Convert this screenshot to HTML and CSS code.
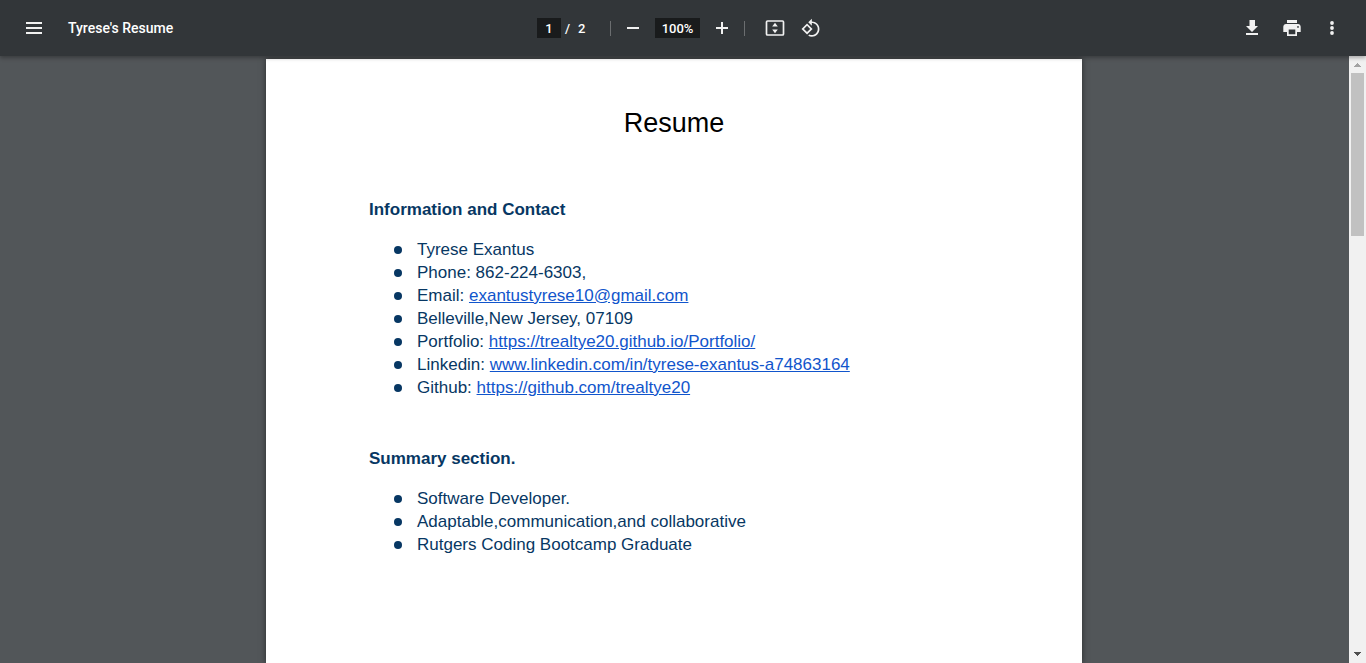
FILE: index.html
```html
<!DOCTYPE html>
<html lang="en">
<head>
<meta charset="utf-8">
<meta name="viewport" content="width=device-width, initial-scale=1">
<title>Tyrese's Resume</title>
<link rel="stylesheet" href="styles.css">
</head>
<body>
<header class="toolbar">
  <div class="start">
    <button class="icon-button" type="button" aria-label="Menu">
      <svg viewBox="0 0 24 24" shape-rendering="crispEdges"><path d="M4 6h16v2H4zM4 11h16v2H4zM4 16h16v2H4z"/></svg>
    </button>
    <h1 class="title">Tyrese's Resume</h1>
  </div>
  <div class="center">
    <input class="field page-field" type="text" value="1" aria-label="Page number">
    <span class="slash">/</span>
    <span class="page-count">2</span>
    <span class="divider"></span>
    <button class="icon-button" type="button" aria-label="Zoom out">
      <svg viewBox="0 0 24 24"><path d="M6 11h12v2H6z"/></svg>
    </button>
    <input class="field zoom-field" type="text" value="100%" aria-label="Zoom level">
    <button class="icon-button" type="button" aria-label="Zoom in">
      <svg viewBox="0 0 24 24"><path d="M18 13h-5v5h-2v-5H6v-2h5V6h2v5h5z"/></svg>
    </button>
    <span class="divider divider-wide"></span>
    <button class="icon-button" type="button" aria-label="Fit to page">
      <svg viewBox="0 0 24 24"><rect x="3.500" y="5" width="17" height="14" rx="1" fill="none" stroke="#f1f1f1" stroke-width="1.700"/><path d="M12 6.800l2.800 3.600H9.200zM12 17.200l2.800-3.600H9.200z"/></svg>
    </button>
    <button class="icon-button" type="button" aria-label="Rotate counterclockwise">
      <svg viewBox="0 0 24 24"><path d="M7.34 6.41L.86 12.9l6.49 6.48 6.49-6.48-6.5-6.49zM3.69 12.9l3.66-3.66L11 12.9l-3.66 3.66-3.65-3.66zm15.67-6.26C17.61 4.88 15.3 4 13 4V.76L8.76 5 13 9.24V6c1.79 0 3.58.68 4.95 2.05 2.73 2.73 2.73 7.17 0 9.9C16.58 19.32 14.79 20 13 20c-.97 0-1.94-.21-2.84-.61l-1.49 1.49C10.02 21.62 11.51 22 13 22c2.3 0 4.61-.88 6.36-2.64 3.52-3.51 3.52-9.21 0-12.72z" transform="translate(1.800 2) scale(.85)"/></svg>
    </button>
  </div>
  <div class="end">
    <button class="icon-button" type="button" aria-label="Download">
      <svg viewBox="0 0 24 24"><path d="M18 10h-3V4H9.500v6H6l6 6zM6 17h12v2H6z"/></svg>
    </button>
    <button class="icon-button" type="button" aria-label="Print">
      <svg viewBox="0 0 24 24"><path fill-rule="evenodd" d="M17 4H7v3h10zM6 8C4.500 8 3.300 9.200 3.300 10.700V16H7v4h10v-4h3.700v-5.300C20.700 9.200 19.500 8 18 8zM15.300 18.200H8.700v-4.700h6.600zM18 11.800a.9.9 0 1 1 0-1.800.9.900 0 0 1 0 1.800z"/></svg>
    </button>
    <button class="icon-button" type="button" aria-label="More actions">
      <svg viewBox="0 0 24 24"><circle cx="12" cy="7" r="1.900"/><circle cx="12" cy="12" r="1.900"/><circle cx="12" cy="17" r="1.900"/></svg>
    </button>
  </div>
</header>
<div class="viewer">
  <main class="pages">
    <article class="page">
      <h2 class="doc-title">Resume</h2>
      <section class="section">
        <h3 class="heading">Information and Contact</h3>
        <ul class="list">
          <li>Tyrese Exantus</li>
          <li>Phone: 862-224-6303,</li>
          <li>Email: <a href="mailto:exantustyrese10@gmail.com">exantustyrese10@gmail.com</a></li>
          <li>Belleville,New Jersey, 07109</li>
          <li>Portfolio: <a href="https://trealtye20.github.io/Portfolio/">https://trealtye20.github.io/Portfolio/</a></li>
          <li>Linkedin: <a href="https://www.linkedin.com/in/tyrese-exantus-a74863164">www.linkedin.com/in/tyrese-exantus-a74863164</a></li>
          <li>Github: <a href="https://github.com/trealtye20">https://github.com/trealtye20</a></li>
        </ul>
      </section>
      <section class="section">
        <h3 class="heading">Summary section.</h3>
        <ul class="list">
          <li>Software Developer.</li>
          <li>Adaptable,communication,and collaborative</li>
          <li>Rutgers Coding Bootcamp Graduate</li>
        </ul>
      </section>
    </article>
  </main>
  <div class="scrollbar" aria-hidden="true">
    <svg class="arrow" viewBox="0 0 17 17" shape-rendering="crispEdges"><path d="M8 7h1v1h1v1h1v1h1v1H5v-1h1V9h1V8h1z" fill="#a3a3a3"/></svg>
    <div class="track"><div class="thumb"></div></div>
    <svg class="arrow" viewBox="0 0 17 17" shape-rendering="crispEdges"><path d="M5 6h7v1h-1v1h-1v1H9v1H8V9H7V8H6V7H5z" fill="#505050"/></svg>
  </div>
</div>
</body>
</html>
```

FILE: styles.css
```css
* {
  box-sizing: border-box;
}

body {
  margin: 0;
  height: 100vh;
  display: flex;
  flex-direction: column;
  overflow: hidden;
  background: #525659;
  font-family: Roboto, "Liberation Sans", sans-serif;
}

.toolbar {
  display: grid;
  grid-template-columns: 1fr auto 1fr;
  align-items: center;
  flex: none;
  height: 56px;
  padding: 0 18px;
  background: #323639;
  color: #fff;
  font-size: 13px;
  font-weight: 500;
  z-index: 1;
  box-shadow: 0 2px 4px rgba(0, 0, 0, 0.3);
}

.start,
.center,
.end {
  display: flex;
  align-items: center;
}

.start {
  gap: 18px;
}

.center {
  padding-right: 2px;
}

.end {
  gap: 8px;
  justify-content: flex-end;
}

.title {
  margin: 0;
  font-size: 14px;
  font-weight: 500;
}

.icon-button {
  display: flex;
  align-items: center;
  justify-content: center;
  width: 32px;
  height: 32px;
  padding: 0;
  border: 0;
  border-radius: 50%;
  background: none;
}

.icon-button + .icon-button {
  margin-left: 4px;
}

.end .icon-button {
  margin-left: 0;
}

.icon-button svg {
  width: 24px;
  height: 24px;
  fill: #f1f1f1;
}

.field {
  height: 20px;
  padding: 0;
  border: 0;
  background: #191b1c;
  color: #fff;
  font: inherit;
  text-align: center;
}

.page-field {
  width: 24px;
}

.zoom-field {
  width: 45px;
  margin: 0 6px;
}

.slash {
  width: 5px;
  margin: 0 8px 0 4px;
}

.page-count {
  width: 8px;
}

.divider {
  width: 1px;
  height: 15px;
  margin: 0 6px 0 24px;
  background: #6b6e70;
}

.divider-wide {
  margin: 0 14px 0 6px;
}

.viewer {
  display: flex;
  flex: 1;
  min-height: 0;
}

.pages {
  flex: 1;
  min-width: 0;
  padding: 3px 1px 0 0;
  overflow: hidden;
}

.page {
  max-width: 816px;
  min-height: 100%;
  margin: 0 auto;
  padding: 48px 103px;
  background: #fff;
  box-shadow: 0 0 6px rgba(0, 0, 0, 0.5);
  color: #073763;
  font-family: "Liberation Sans", Arial, sans-serif;
  font-size: 17px;
  line-height: 23px;
}

.doc-title {
  margin: 0;
  color: #000;
  font-size: 27px;
  font-weight: 400;
  line-height: 32px;
  text-align: center;
}

.section {
  margin-top: 48px;
}

.doc-title + .section {
  margin-top: 59px;
}

.heading {
  margin: 0 0 17px;
  font-size: 17px;
}

.list {
  margin: 0;
  padding: 0 0 0 25px;
  list-style: none;
}

.list li::before {
  content: "";
  display: inline-block;
  width: 8px;
  height: 8px;
  margin-right: 15px;
  border-radius: 50%;
  background: #073763;
  vertical-align: 1px;
}

.list a {
  color: #1155cc;
}

.scrollbar {
  display: flex;
  flex-direction: column;
  flex: none;
  width: 17px;
  background: #f1f1f1;
}

.arrow {
  width: 17px;
  height: 17px;
}

.track {
  flex: 1;
  padding: 0 2px;
}

.thumb {
  height: 163px;
  background: #c1c1c1;
}
```
